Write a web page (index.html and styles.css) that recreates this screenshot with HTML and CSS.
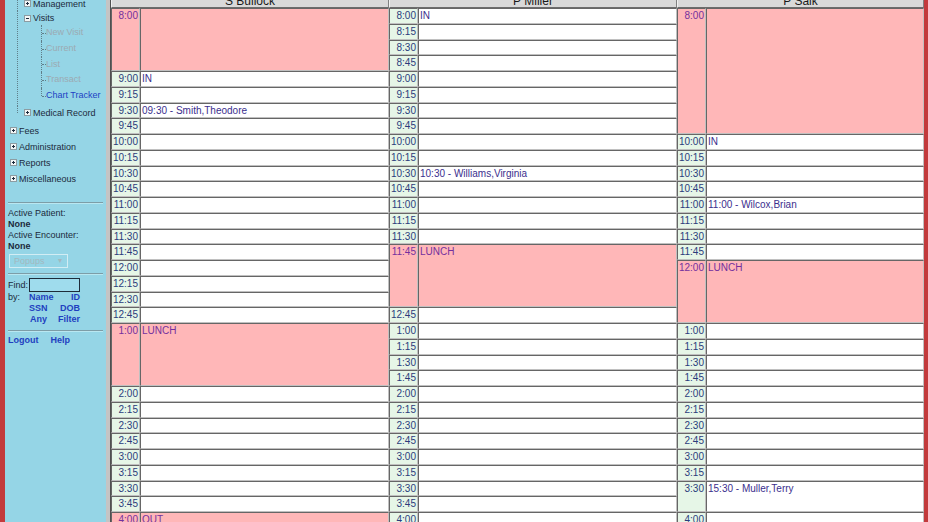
FILE: index.html
```html
<!DOCTYPE html>
<html lang="en">
  <head>
    <meta charset="UTF-8" />
    <title>Appointment Book</title>
    <link rel="stylesheet" href="styles.css">
  </head>
  <body>
    <div class="page">

      <aside class="sidebar">
        <div class="tree">
          <div class="branch">
            <div class="node"><span class="box plus"></span>Management</div>
            <div class="node open">
              <div class="label"><span class="box"></span>Visits</div>
              <div class="leaves">
                <div class="leaf off">New Visit</div>
                <div class="leaf off">Current</div>
                <div class="leaf off">List</div>
                <div class="leaf off">Transact</div>
                <div class="leaf on">Chart Tracker</div>
              </div>
            </div>
            <div class="node last"><span class="box plus"></span>Medical Record</div>
          </div>
          <div class="top first"><span class="box plus"></span>Fees</div>
          <div class="top"><span class="box plus"></span>Administration</div>
          <div class="top"><span class="box plus"></span>Reports</div>
          <div class="top"><span class="box plus"></span>Miscellaneous</div>
        </div>

        <div class="rule r1"></div>

        <div class="status">
          <div>Active Patient:</div>
          <div class="bold">None</div>
          <div>Active Encounter:</div>
          <div class="bold">None</div>
        </div>

        <div class="popups">Popups<span class="arrow">&#9662;</span></div>

        <div class="rule r2"></div>

        <div class="find">
          <span class="lbl">Find:</span>
          <span class="findbox"></span>
        </div>
        <div class="by">
          <span class="lbl">by:</span><a class="lnk">Name</a><a class="lnk rt">ID</a>
          <span></span><a class="lnk">SSN</a><a class="lnk rt">DOB</a>
          <span></span><a class="lnk any">Any</a><a class="lnk rt">Filter</a>
        </div>

        <div class="rule r3"></div>

        <div class="bottom">
          <a class="lnk">Logout</a>
          <a class="lnk">Help</a>
        </div>
      </aside>

      <main class="schedule">

        <section class="col col1">
          <div class="head">S Bullock</div>
          <div class="day">
            <div class="t pink s4">8:00</div><div class="c pink s4"></div>
            <div class="t">9:00</div><div class="c">IN</div>
            <div class="t">9:15</div><div class="c"></div>
            <div class="t">9:30</div><div class="c">09:30 - Smith,Theodore</div>
            <div class="t">9:45</div><div class="c"></div>
            <div class="t">10:00</div><div class="c"></div>
            <div class="t">10:15</div><div class="c"></div>
            <div class="t">10:30</div><div class="c"></div>
            <div class="t">10:45</div><div class="c"></div>
            <div class="t">11:00</div><div class="c"></div>
            <div class="t">11:15</div><div class="c"></div>
            <div class="t">11:30</div><div class="c"></div>
            <div class="t">11:45</div><div class="c"></div>
            <div class="t">12:00</div><div class="c"></div>
            <div class="t">12:15</div><div class="c"></div>
            <div class="t">12:30</div><div class="c"></div>
            <div class="t">12:45</div><div class="c"></div>
            <div class="t pink s4">1:00</div><div class="c pink s4">LUNCH</div>
            <div class="t">2:00</div><div class="c"></div>
            <div class="t">2:15</div><div class="c"></div>
            <div class="t">2:30</div><div class="c"></div>
            <div class="t">2:45</div><div class="c"></div>
            <div class="t">3:00</div><div class="c"></div>
            <div class="t">3:15</div><div class="c"></div>
            <div class="t">3:30</div><div class="c"></div>
            <div class="t">3:45</div><div class="c"></div>
            <div class="t pink">4:00</div><div class="c pink">OUT</div>
          </div>
        </section>

        <section class="col col2">
          <div class="head">P Miller</div>
          <div class="day">
            <div class="t">8:00</div><div class="c">IN</div>
            <div class="t">8:15</div><div class="c"></div>
            <div class="t">8:30</div><div class="c"></div>
            <div class="t">8:45</div><div class="c"></div>
            <div class="t">9:00</div><div class="c"></div>
            <div class="t">9:15</div><div class="c"></div>
            <div class="t">9:30</div><div class="c"></div>
            <div class="t">9:45</div><div class="c"></div>
            <div class="t">10:00</div><div class="c"></div>
            <div class="t">10:15</div><div class="c"></div>
            <div class="t">10:30</div><div class="c">10:30 - Williams,Virginia</div>
            <div class="t">10:45</div><div class="c"></div>
            <div class="t">11:00</div><div class="c"></div>
            <div class="t">11:15</div><div class="c"></div>
            <div class="t">11:30</div><div class="c"></div>
            <div class="t pink s4">11:45</div><div class="c pink s4">LUNCH</div>
            <div class="t">12:45</div><div class="c"></div>
            <div class="t">1:00</div><div class="c"></div>
            <div class="t">1:15</div><div class="c"></div>
            <div class="t">1:30</div><div class="c"></div>
            <div class="t">1:45</div><div class="c"></div>
            <div class="t">2:00</div><div class="c"></div>
            <div class="t">2:15</div><div class="c"></div>
            <div class="t">2:30</div><div class="c"></div>
            <div class="t">2:45</div><div class="c"></div>
            <div class="t">3:00</div><div class="c"></div>
            <div class="t">3:15</div><div class="c"></div>
            <div class="t">3:30</div><div class="c"></div>
            <div class="t">3:45</div><div class="c"></div>
            <div class="t">4:00</div><div class="c"></div>
          </div>
        </section>

        <section class="col col3">
          <div class="head">P Salk</div>
          <div class="day">
            <div class="t pink s8">8:00</div><div class="c pink s8"></div>
            <div class="t">10:00</div><div class="c">IN</div>
            <div class="t">10:15</div><div class="c"></div>
            <div class="t">10:30</div><div class="c"></div>
            <div class="t">10:45</div><div class="c"></div>
            <div class="t">11:00</div><div class="c">11:00 - Wilcox,Brian</div>
            <div class="t">11:15</div><div class="c"></div>
            <div class="t">11:30</div><div class="c"></div>
            <div class="t">11:45</div><div class="c"></div>
            <div class="t pink s4">12:00</div><div class="c pink s4">LUNCH</div>
            <div class="t">1:00</div><div class="c"></div>
            <div class="t">1:15</div><div class="c"></div>
            <div class="t">1:30</div><div class="c"></div>
            <div class="t">1:45</div><div class="c"></div>
            <div class="t">2:00</div><div class="c"></div>
            <div class="t">2:15</div><div class="c"></div>
            <div class="t">2:30</div><div class="c"></div>
            <div class="t">2:45</div><div class="c"></div>
            <div class="t">3:00</div><div class="c"></div>
            <div class="t">3:15</div><div class="c"></div>
            <div class="t s2">3:30</div><div class="c s2">15:30 - Muller,Terry</div>
            <div class="t">4:00</div><div class="c"></div>
          </div>
        </section>

      </main>
    </div>
  </body>
</html>
```

FILE: styles.css
```css
body{
  margin: 0;
  width: 928px;
  height: 522px;
  overflow: hidden;
  background: #c23a3c;
  font-family: "Liberation Sans", Arial, sans-serif;
}

.page{
  display: flex;
  height: 522px;
  padding-left: 5px;
}

/* left menu */

.sidebar{
  width: 101px;
  flex: none;
  background: #95d5e6;
  border-right: 4px solid #c4c4c4;
  font-size: 9px;
  color: #1c2a3c;
  overflow: hidden;
}

.tree{
  margin-top: -4px;
}

.branch{
  margin-left: 12px;
}

.node{
  position: relative;
  padding-left: 7px;
}

.node::before{
  content: "";
  position: absolute;
  left: 0;
  top: 0;
  bottom: 0;
  border-left: 1px dotted #5f7f8a;
}

.node.last::before{
  bottom: 50%;
}

.node,
.node .label,
.top{
  display: flex;
  align-items: center;
  white-space: nowrap;
}

.branch > .node:first-child{
  height: 15px;
}

.node.open{
  display: block;
}

.node .label{
  height: 14px;
}

.node.last{
  height: 16px;
  margin-top: 1px;
}

.leaves{
  margin-left: 17px;
}

.leaf{
  position: relative;
  height: 15.75px;
  line-height: 15.75px;
  padding-left: 5px;
  white-space: nowrap;
}

.leaf::before{
  content: "";
  position: absolute;
  left: 0;
  top: 0;
  bottom: 0;
  border-left: 1px dotted #5f7f8a;
}

.leaf:last-child::before{
  bottom: 50%;
}

.leaf::after{
  content: "";
  position: absolute;
  left: 1px;
  top: 50%;
  width: 4px;
  border-top: 1px dotted #5f7f8a;
}

.leaf.off{
  color: #9caab2;
}

.leaf.on{
  color: #2141c4;
}

.top{
  height: 16px;
  padding-left: 5px;
}

.top.first{
  margin-top: 2px;
}

.box{
  width: 7px;
  height: 7px;
  box-sizing: border-box;
  border: 1px solid #8d9ca2;
  background: #f2f6f6;
  position: relative;
  margin-right: 2px;
  flex: none;
}

.box::before{
  content: "";
  position: absolute;
  left: 1px;
  right: 1px;
  top: 2px;
  height: 1px;
  background: #1c2a3c;
}

.box.plus::after{
  content: "";
  position: absolute;
  top: 1px;
  bottom: 1px;
  left: 2px;
  width: 1px;
  background: #1c2a3c;
}

.rule{
  margin-left: 3px;
  width: 95px;
  height: 1px;
  background: #7d9da7;
  border-bottom: 1px solid #b9e7f1;
}

.r1{ margin-top: 15px; }
.r2{ margin-top: 5px; }
.r3{ margin-top: 4.5px; }

.status{
  margin-top: 4px;
  padding-left: 3px;
  line-height: 11px;
}

.bold{
  font-weight: bold;
}

.popups{
  margin: 2.25px 0 0 4px;
  width: 59px;
  height: 14px;
  box-sizing: border-box;
  border: 1px solid #d2edf4;
  padding-left: 4px;
  line-height: 12px;
  font-size: 9px;
  color: #a3b8bf;
  display: flex;
  justify-content: space-between;
}

.popups .arrow{
  padding-right: 5px;
  font-size: 8px;
}

.find{
  margin-top: 3px;
  padding-left: 3px;
  height: 14px;
  display: flex;
  align-items: center;
}

.lbl{
  width: 21px;
}

.findbox{
  width: 51px;
  height: 14px;
  box-sizing: border-box;
  border: 1px solid #1e2c3a;
  background: #9fdced;
}

.by{
  margin-left: 3px;
  width: 72px;
  display: grid;
  grid-template-columns: 21px 1fr 1fr;
  line-height: 11px;
}

.lnk{
  color: #1f3fc0;
  font-weight: bold;
  text-decoration: none;
}

.lnk.rt{
  text-align: right;
}

.lnk.any{
  padding-left: 1px;
}

.bottom{
  margin-top: 3.5px;
  padding-left: 3px;
  line-height: 11px;
  display: flex;
  gap: 12px;
}

/* appointment columns */

.schedule{
  display: flex;
  align-items: flex-start;
  width: 813px;
  margin-top: -9px;
  border-left: 1px solid #505050;
}

.col{
  display: flex;
  flex-direction: column;
}

.col1{ width: 278px; }
.col2{ width: 288px; }
.col3{ width: 247px; }

.head{
  height: 17px;
  box-sizing: border-box;
  padding-top: 3px;
  line-height: 12px;
  font-size: 12px;
  text-align: center;
  background: #d9d9d9;
  border: 1px solid;
  border-color: #f0f0f0 #808080 #6c6c6c #f0f0f0;
  color: #1a1a1a;
}

.day{
  display: grid;
  grid-template-columns: 29px 1fr;
  grid-auto-rows: 15.75px;
}

.t,
.c{
  box-sizing: border-box;
  border-style: solid;
  border-width: 1px;
  border-color: #666666 #c0c0c0 #c0c0c0 #666666;
  font-size: 10px;
  line-height: 13px;
  white-space: nowrap;
  overflow: hidden;
}

.t{
  background: #e6f6e7;
  text-align: right;
  padding-right: 1px;
  color: #2b3c7c;
}

.c{
  background: #ffffff;
  padding-left: 1px;
  color: #3b2f8e;
}

.t.pink,
.c.pink{
  background: #ffb7b8;
  color: #74309e;
}

.s2{ grid-row: span 2; }
.s4{ grid-row: span 4; }
.s8{ grid-row: span 8; }
```
